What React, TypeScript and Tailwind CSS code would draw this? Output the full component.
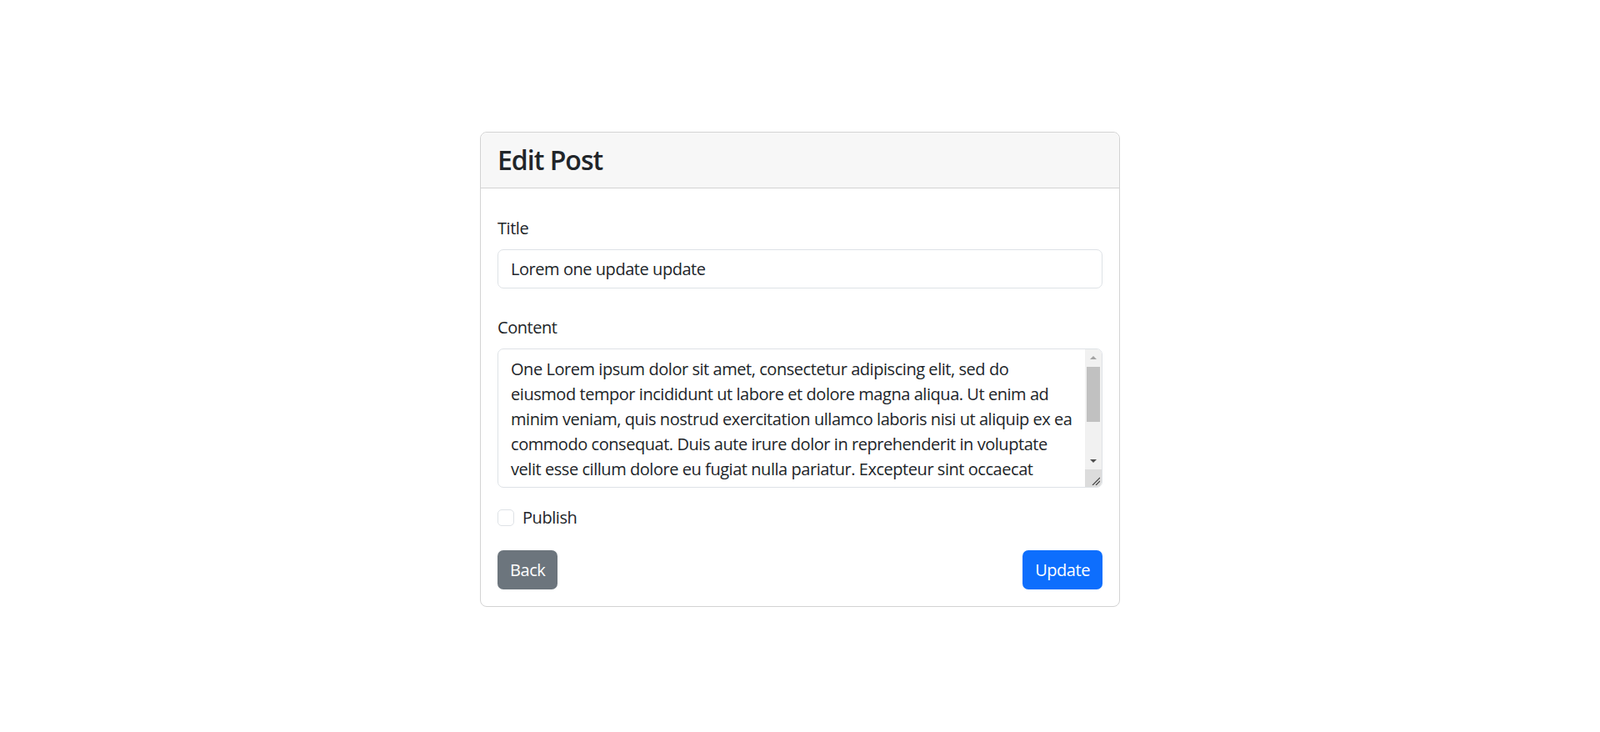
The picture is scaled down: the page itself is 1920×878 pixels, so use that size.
const content =
  'One Lorem ipsum dolor sit amet, consectetur adipiscing elit, sed do eiusmod tempor incididunt ut labore et dolore magna aliqua. Ut enim ad minim veniam, quis nostrud exercitation ullamco laboris nisi ut aliquip ex ea commodo consequat. Duis aute irure dolor in reprehenderit in voluptate velit esse cillum dolore eu fugiat nulla pariatur. Excepteur sint occaecat cupidatat non proident, sunt in culpa qui officia deserunt mollit anim id est laborum.'

// the browser hides real scrollbars, so draw the textarea one on top
function FakeScrollbar() {
  return (
    <div className="pointer-events-none absolute right-[1px] top-[1px] bottom-[1px] flex w-[20px] flex-col overflow-hidden rounded-r-[6px] bg-[#f1f1f1]">
      <div className="flex h-[20px] items-center justify-center">
        <svg width="8" height="4" viewBox="0 0 8 4"><path d="M0 4L4 0L8 4Z" fill="#a3a3a3" /></svg>
      </div>
      <div className="flex-1 px-[2px] pt-[1px]">
        <div className="h-[66px] bg-[#c1c1c1]" />
      </div>
      <div className="flex h-[20px] items-center justify-center">
        <svg width="8" height="4" viewBox="0 0 8 4"><path d="M0 0L8 0L4 4Z" fill="#505050" /></svg>
      </div>
      <div className="relative h-[21px] bg-[#dcdcdc]">
        <svg className="absolute right-[2px] bottom-[2px]" width="10" height="10" viewBox="0 0 10 10">
          <path d="M1 10L10 1M5 10L10 5" stroke="#444" strokeWidth="1.2" />
        </svg>
      </div>
    </div>
  )
}

export default function App() {
  return (
    <div className="min-h-screen bg-white font-['Open_Sans',sans-serif] text-[20px] leading-[30px] tracking-[-0.45px] text-[#212529]">
      <div className="mx-auto w-[768px] pt-[158px]">
        <div className="rounded-[8px] border border-[#d3d3d3] bg-white">
          <div className="rounded-t-[8px] border-b border-[#d3d3d3] bg-[#f7f7f7] px-[20px] py-[12px]">
            <h3 className="text-[32px] leading-[42px] font-semibold tracking-[-1px]">Edit Post</h3>
          </div>
          <form className="px-[20px] pt-[33px] pb-[20px]" onSubmit={e => e.preventDefault()}>
            <label className="block mb-[10px]">Title</label>
            <input
              type="text"
              defaultValue="Lorem one update update"
              className="block w-full h-[47px] rounded-[7px] border border-[#dee2e6] px-[15px] outline-none"
            />

            <label className="block mt-[32px] mb-[10px]">Content</label>
            <div className="relative">
              <textarea
                rows={5}
                defaultValue={content}
                className="block w-full h-[167px] rounded-[7px] border border-[#dee2e6] pl-[15px] pr-[33px] pt-[9px] pb-[5px] outline-none resize-none overflow-hidden"
              />
              <FakeScrollbar />
            </div>

            <div className="mt-[21px] flex items-center gap-[10px]">
              <input type="checkbox" className="appearance-none size-[20px] rounded-[5px] border border-[#dee2e6] bg-white" />
              <label>Publish</label>
            </div>

            <div className="mt-[24px] flex items-center justify-between">
              <button type="button" className="h-[47px] rounded-[7px] bg-[#6c757d] px-[15px] text-white">Back</button>
              <button type="submit" className="h-[47px] rounded-[7px] bg-[#0d6efd] px-[15px] text-white">Update</button>
            </div>
          </form>
        </div>
      </div>
    </div>
  )
}
